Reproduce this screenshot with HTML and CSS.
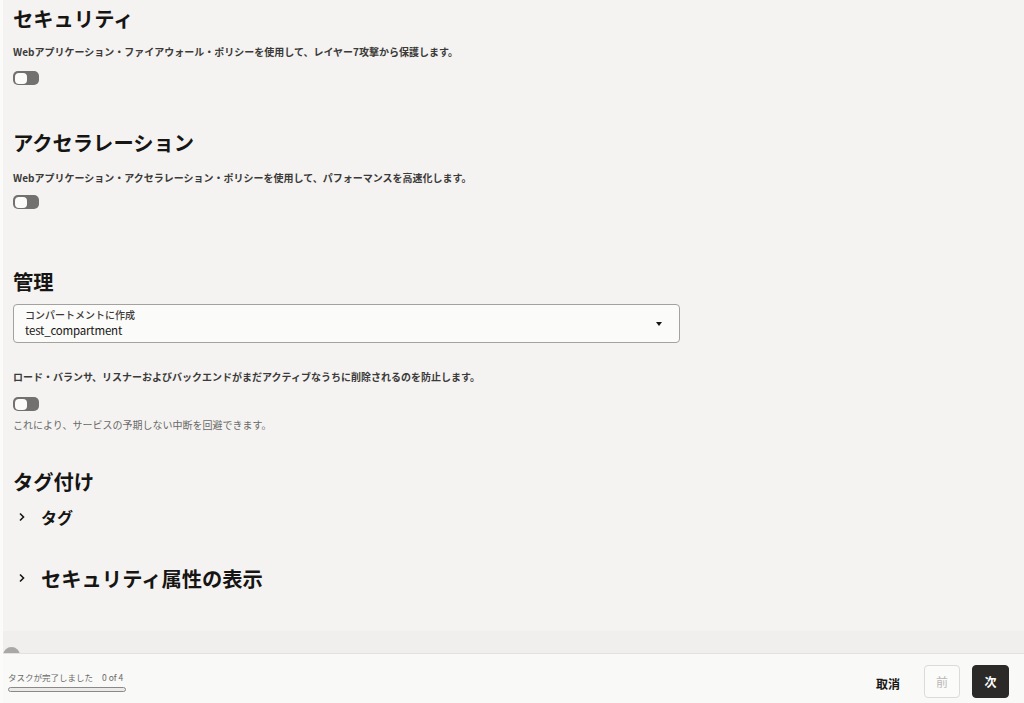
FILE: index.html
```html
<!DOCTYPE html>
<html lang="ja">
<head>
<meta charset="utf-8">
<title>ロード・バランサ</title>
<link rel="stylesheet" href="styles.css">
</head>
<body>
<div class="page">
  <main class="content">
    <section class="sec sec-first">
      <h2 class="title">セキュリティ</h2>
      <p class="desc">Webアプリケーション・ファイアウォール・ポリシーを使用して、レイヤー7攻撃から保護します。</p>
      <span class="toggle t1"><span class="knob"></span></span>
    </section>

    <section class="sec sec-accel">
      <h2 class="title">アクセラレーション</h2>
      <p class="desc d2">Webアプリケーション・アクセラレーション・ポリシーを使用して、パフォーマンスを高速化します。</p>
      <span class="toggle t2"><span class="knob"></span></span>
    </section>

    <section class="sec sec-manage">
      <h2 class="title">管理</h2>
      <div class="select">
        <div class="select-text">
          <div class="select-label">コンパートメントに作成</div>
          <div class="select-value">test_compartment</div>
        </div>
        <span class="caret"></span>
      </div>
      <p class="desc d3">ロード・バランサ、リスナーおよびバックエンドがまだアクティブなうちに削除されるのを防止します。</p>
      <span class="toggle t1"><span class="knob"></span></span>
      <p class="help">これにより、サービスの予期しない中断を回避できます。</p>
    </section>

    <section class="sec sec-tags">
      <h2 class="title">タグ付け</h2>
      <div class="expander ex-small">
        <svg class="chev" width="8" height="10" viewBox="0 0 8 10"><polyline points="2,1.5 5.5,5 2,8.5" fill="none" stroke="#161513" stroke-width="1.6"/></svg>
        <span>タグ</span>
      </div>
      <div class="expander ex-large">
        <svg class="chev" width="8" height="10" viewBox="0 0 8 10"><polyline points="2,1.5 5.5,5 2,8.5" fill="none" stroke="#161513" stroke-width="1.6"/></svg>
        <span>セキュリティ属性の表示</span>
      </div>
    </section>
  </main>
  <div class="band"><span class="blob"></span></div>
  <footer class="footer">
    <div class="progress">
      <div class="progress-text"><span>タスクが完了しました</span><span class="count">0 of 4</span></div>
      <div class="bar"></div>
    </div>
    <div class="actions">
      <button class="btn btn-text">取消</button>
      <button class="btn btn-outline" disabled>前</button>
      <button class="btn btn-primary">次</button>
    </div>
  </footer>
</div>
</body>
</html>
```
FILE: styles.css
```css
* { box-sizing: border-box; }
html, body { margin: 0; padding: 0; }
body {
  font-family: "Noto Sans CJK JP", "Noto Sans", sans-serif;
  color: #161513;
  background: #f4f3f1;
}
.page {
  width: 1024px;
  height: 703px;
  display: flex;
  flex-direction: column;
  overflow: hidden;
  border-left: 3px solid #fbfbfa;
}
.content {
  flex: 1;
  padding: 4px 0 0 10px;
  overflow: hidden;
}
.sec { display: flex; flex-direction: column; align-items: flex-start; }
.title {
  margin: 0;
  font-size: 20.3px;
  line-height: 28px;
  font-weight: 700;
}
.desc {
  margin: 12px 0 0;
  font-size: 10px;
  line-height: 16px;
  font-weight: 700;
  color: #3b3a38;
}
.d2 { margin-top: 14px; }
.d3 { margin-top: 26px; }
.toggle {
  display: flex;
  width: 26px;
  height: 14px;
  margin-top: 11px;
  background: #727170;
  border-radius: 5px;
  padding: 1.5px;
}
.t2 { margin-top: 9px; }
.sec-manage .toggle { margin-top: 12px; }
.knob {
  width: 12px;
  height: 11px;
  background: #fbfbfa;
  border-radius: 4px;
}
.sec-accel { margin-top: 43px; }
.sec-manage { margin-top: 58px; }
.sec-tags { margin-top: 34px; }

.select {
  margin-top: 9px;
  width: 667px;
  height: 39px;
  border: 1px solid #a3a29f;
  border-radius: 4px;
  background: #fbfbfa;
  display: flex;
  align-items: center;
  justify-content: space-between;
  padding: 3px 17px 2px 11px;
}
.select-text { align-self: flex-start; }
.select-label {
  font-size: 10px;
  line-height: 14px;
  color: #3b3a38;
  font-weight: 500;
}
.select-value {
  font-size: 11.5px;
  line-height: 16px;
  color: #161513;
  letter-spacing: -0.2px;
}
.caret {
  width: 0;
  height: 0;
  border-left: 3.5px solid transparent;
  border-right: 3.5px solid transparent;
  border-top: 4px solid #161513;
}
.help {
  margin: 6px 0 0;
  font-size: 10px;
  line-height: 16px;
  color: #6a6967;
}
.expander {
  display: flex;
  align-items: center;
  font-weight: 700;
}
.chev { margin-left: 5px; margin-right: 15px; }
.ex-small { margin-top: 10px; font-size: 16px; line-height: 24px; }
.ex-large { margin-top: 35px; font-size: 20.3px; line-height: 28px; }

.band {
  height: 22px;
  flex: none;
  background: #f0efed;
  position: relative;
  overflow: hidden;
}
.blob {
  position: absolute;
  left: 0;
  top: 16px;
  width: 17px;
  height: 17px;
  border-radius: 50%;
  background: #a9a8a6;
}
.footer {
  flex: none;
  height: 50px;
  border-top: 1px solid #e2e1df;
  background: #f9f9f8;
  display: flex;
  justify-content: space-between;
  align-items: flex-start;
  padding: 0 15px 0 5px;
}
.progress { padding-top: 17px; }
.progress-text {
  font-size: 8.5px;
  line-height: 12px;
  color: #6a6967;
  display: flex;
  gap: 9px;
}
.bar {
  margin-top: 4px;
  width: 118px;
  height: 5px;
  border: 1px solid #8a8987;
  border-radius: 3px;
  background: #ebeae8;
}
.actions {
  display: flex;
  gap: 12px;
  padding-top: 11px;
}
.btn {
  font-family: inherit;
  height: 33px;
  font-size: 12px;
  font-weight: 700;
  border-radius: 4px;
  padding: 0;
  cursor: pointer;
}
.btn-text {
  background: transparent;
  border: none;
  padding: 0 12px;
  color: #161513;
  margin-top: 2px;
}
.btn-outline {
  width: 36px;
  background: #fbfbfa;
  border: 1px solid #dcdbd9;
  color: #b9b8b6;
  font-weight: 400;
}
.btn-primary {
  width: 37px;
  background: #2b2a28;
  border: 1px solid #2b2a28;
  color: #ffffff;
}
```
